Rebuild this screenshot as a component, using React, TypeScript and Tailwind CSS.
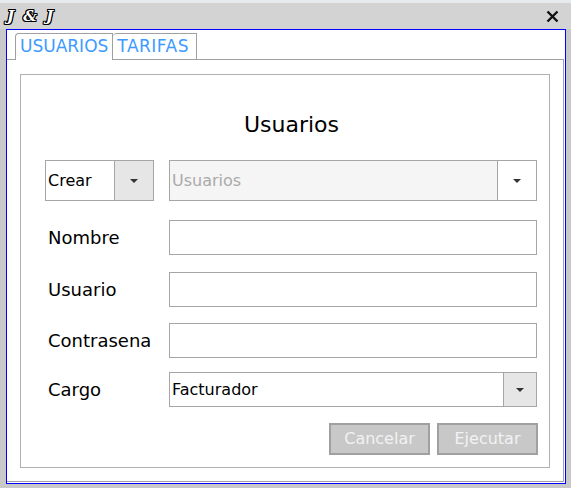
import React from "react";

const Arrow = () => (
  <svg width="8" height="4" viewBox="0 0 8 4" className="block">
    <path d="M0 0h8L4 4z" fill="#333" />
  </svg>
);

const Field = ({ label, className = "" }: { label: string; className?: string }) => (
  <div className={`flex items-center ${className}`}>
    <div className="w-[124px] pl-[3px] text-[18px] text-black">{label}</div>
    <div className="w-[368px] h-[35px] border border-[#a6a6a6] bg-white" />
  </div>
);

export default function App() {
  return (
    <div className="w-[571px] h-[488px] bg-[#c9c9c9] flex flex-col font-['DejaVu_Sans',sans-serif] overflow-hidden">
      {/* strip of the desktop behind */}
      <div className="h-[2px] bg-[#e6ebf0]" />

      {/* Title bar */}
      <div className="h-[27px] bg-[#d3d3d3] border-t border-[#e8e8e8] flex items-center justify-between pl-[7px] pr-[12px]">
        <span className="italic font-bold text-[15px] text-white tracking-[2px] font-['DejaVu_Serif',serif] [text-shadow:1px_0_0_#000,-1px_0_0_#000,0_1px_0_#000,0_-1px_0_#000,1px_1px_0_#000,-1px_-1px_0_#000,1px_-1px_0_#000,-1px_1px_0_#000]">
          J &amp; J
        </span>
        <svg width="13" height="13" viewBox="0 0 13 13">
          <path d="M1.5 1.5l10 10M11.5 1.5l-10 10" stroke="#111" strokeWidth="2.4" />
        </svg>
      </div>

      {/* Window body */}
      <div className="flex-1 ml-[6px] mr-[5px] mb-[4px] border border-[#0000ff] bg-white flex flex-col pt-[3px] pb-[1px] pr-[1px]">
        {/* Tabs */}
        <div className="flex h-[27px] pl-[8px] border-b border-[#a0a0a0] items-end">
          <div className="h-[27px] -mb-px px-[4px] bg-white border border-b-0 border-[#a0a0a0] rounded-tl-[4px] flex items-center text-[17px] text-[#3d9bff]">
            USUARIOS
          </div>
          <div className="h-[26px] pl-[4px] pr-[7px] border border-l-0 border-b-0 border-[#a0a0a0] rounded-tl-[4px] flex items-center text-[17px] text-[#3d9bff] tracking-[0.5px]">
            TARIFAS
          </div>
        </div>

        {/* Tab panel */}
        <div className="flex-1 border-r border-b border-[#a0a0a0] px-[13px] pt-[14px] pb-[13px] flex">
          <div className="flex-1 border border-[#b0b0b0] flex flex-col pl-[24px] pr-[11px] pt-[34px]">
            <div className="text-center text-[22px] text-black h-[32px] leading-[32px]">Usuarios</div>

            <div className="flex mt-[19px] gap-[15px]">
              <div className="flex w-[109px] h-[41px] border border-[#a6a6a6]">
                <div className="flex-1 flex items-center pl-[2px] text-[16px] text-black">Crear</div>
                <div className="w-[39px] flex items-center justify-center border-l border-[#a6a6a6] bg-[#e6e6e6]">
                  <Arrow />
                </div>
              </div>
              <div className="flex w-[368px] h-[41px] border border-[#a6a6a6]">
                <div className="flex-1 flex items-center pl-[2px] text-[16px] bg-[#f5f5f5] text-[#aaaaaa]">Usuarios</div>
                <div className="w-[39px] flex items-center justify-center border-l border-[#a6a6a6] bg-white">
                  <Arrow />
                </div>
              </div>
            </div>

            <div className="flex flex-col mt-[19px] gap-[17px]">
              <Field label="Nombre" />
              <Field label="Usuario" />
              <Field label="Contrasena" className="-mt-px" />
              <div className="flex items-center -mt-[3px]">
                <div className="w-[124px] pl-[3px] text-[18px] text-black">Cargo</div>
                <div className="flex w-[368px] h-[35px] border border-[#a6a6a6]">
                  <div className="flex-1 flex items-center pl-[2px] text-[16px] text-black">Facturador</div>
                  <div className="w-[33px] flex items-center justify-center border-l border-[#a6a6a6] bg-[#e6e6e6]">
                    <Arrow />
                  </div>
                </div>
              </div>
            </div>

            <div className="flex justify-end gap-[7px] mt-[16px]">
              <button className="w-[101px] h-[32px] border-2 border-[#a0a0a0] bg-[#c8c8c8] text-[16px] text-[#f2f2f2]">Cancelar</button>
              <button className="w-[101px] h-[32px] border-2 border-[#a0a0a0] bg-[#c8c8c8] text-[16px] text-[#f2f2f2]">Ejecutar</button>
            </div>
          </div>
        </div>
      </div>
    </div>
  );
}
